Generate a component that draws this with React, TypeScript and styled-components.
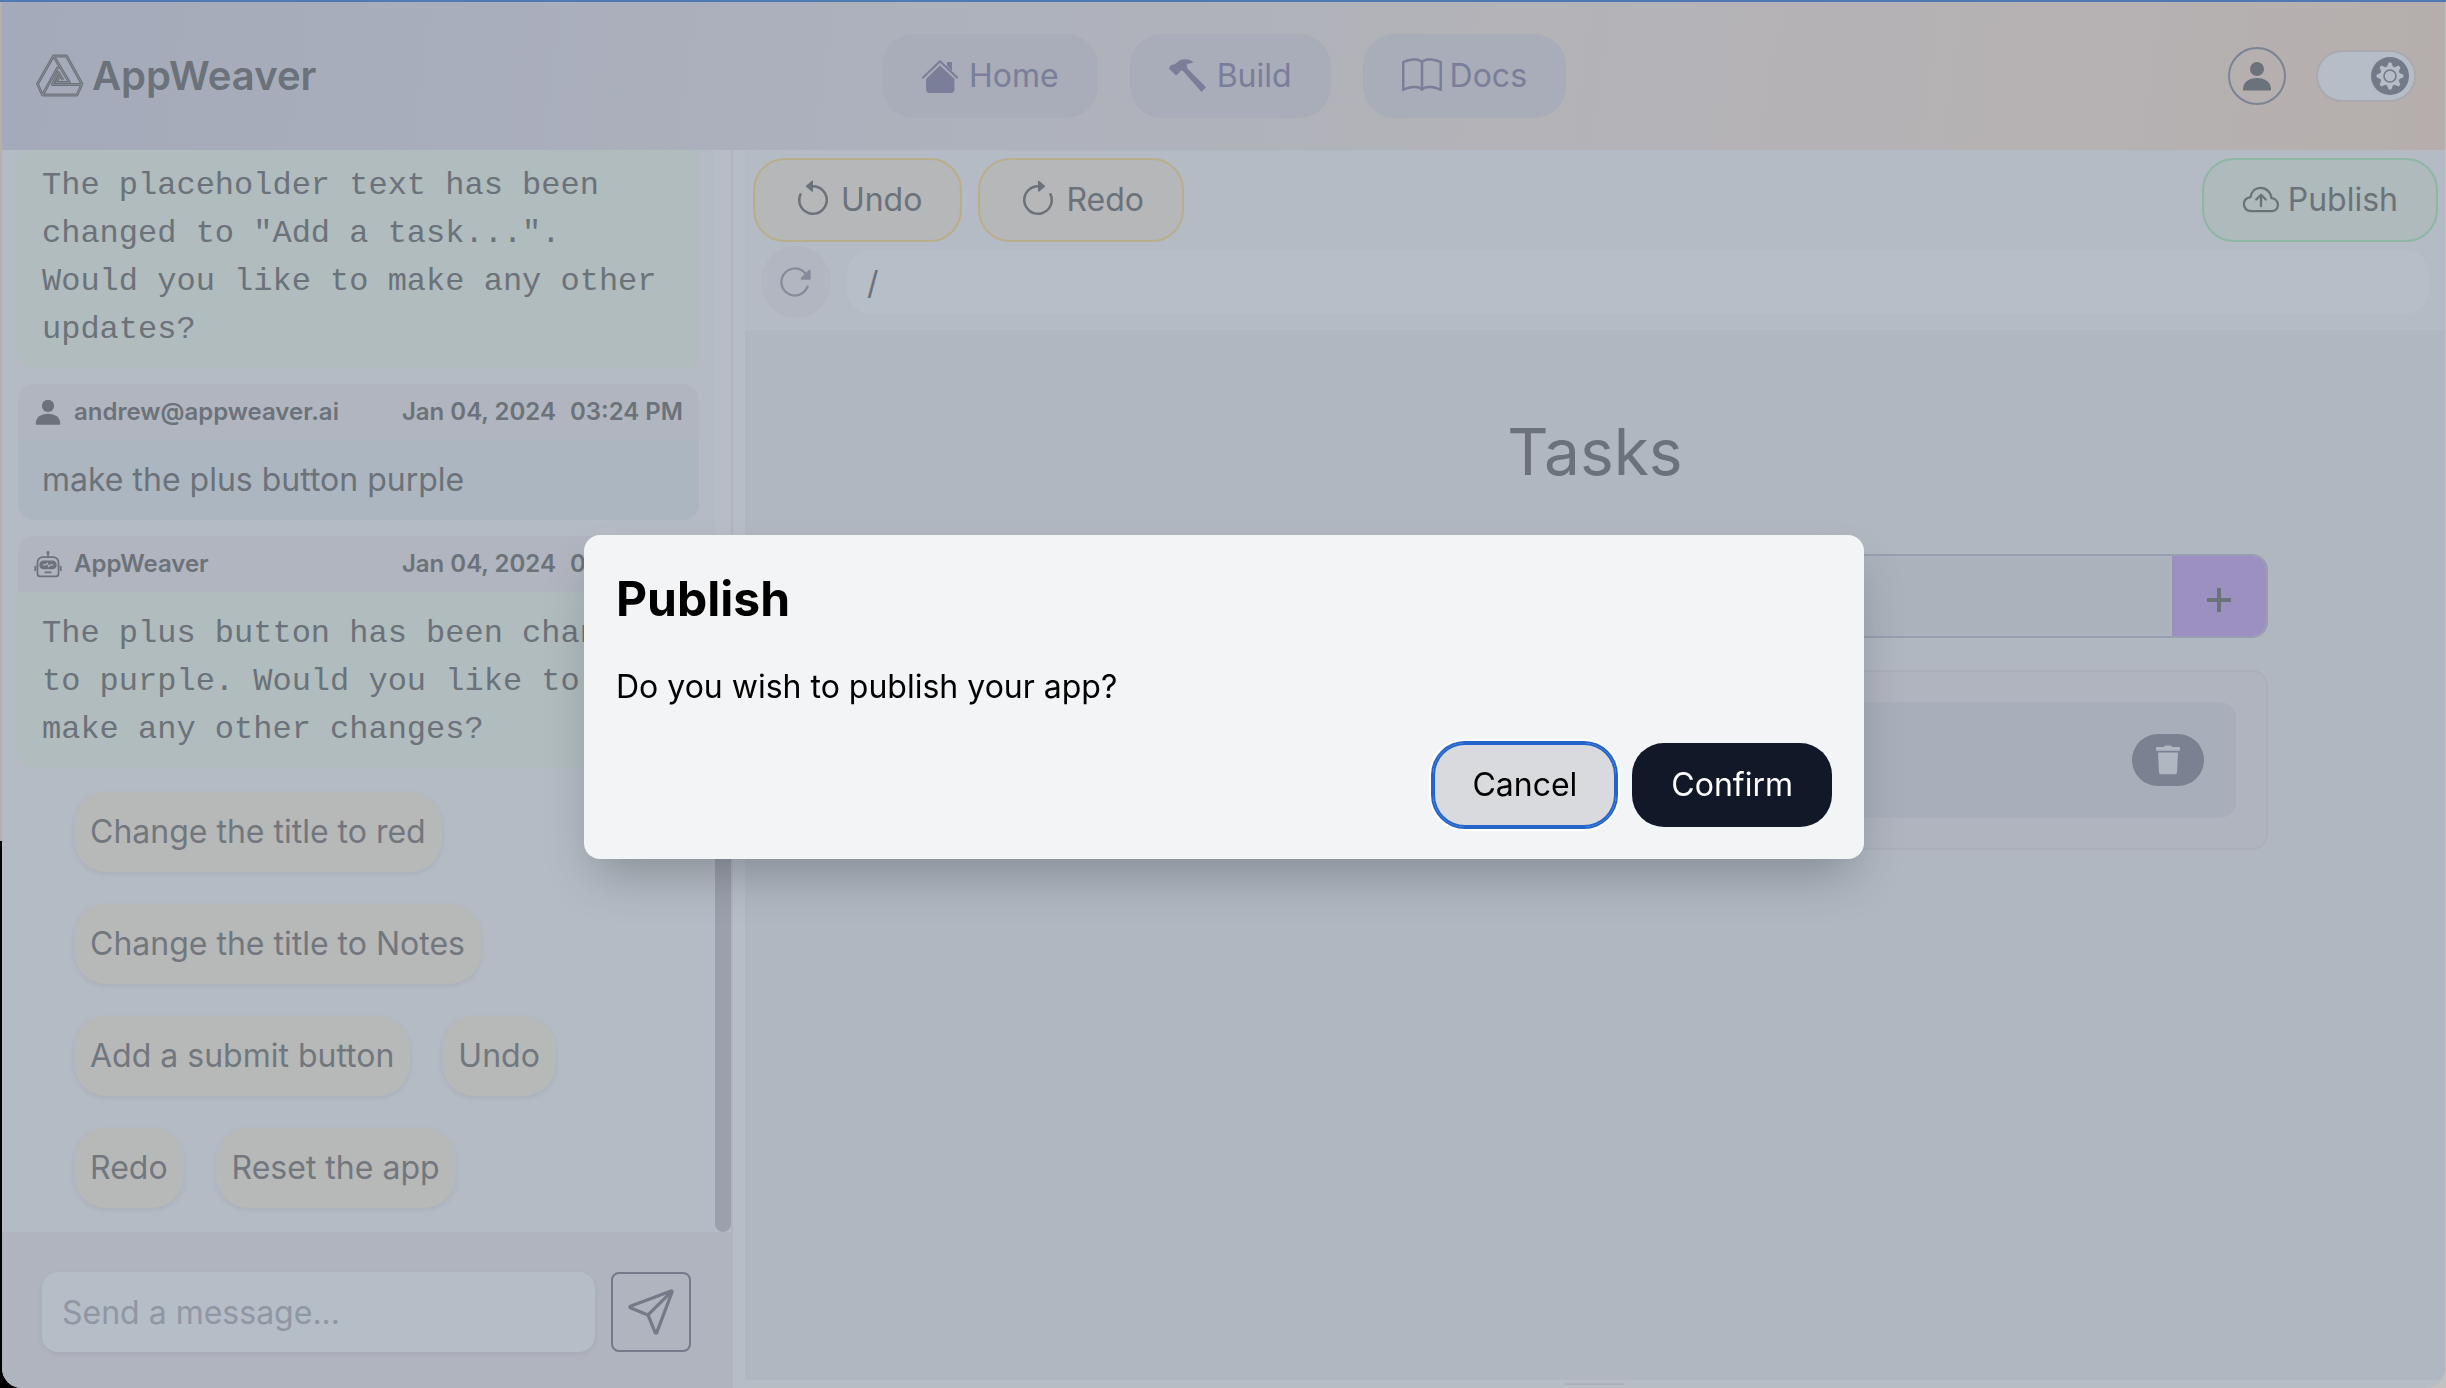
import React from "react";
import styled, { createGlobalStyle } from "styled-components";
import { BsArrowClockwise, BsArrowCounterclockwise, BsBook } from "react-icons/bs";
import { IoPaperPlaneOutline, IoReloadOutline } from "react-icons/io5";

const ink = "#6c7279";
const slate = "#747a88";
const sans = `Inter, "Liberation Sans", sans-serif`;
const mono = `"Liberation Mono", "DejaVu Sans Mono", monospace`;

const GlobalStyle = createGlobalStyle`
  *, *::before, *::after { box-sizing: border-box; }
  body { margin: 0; font-family: ${sans}; font-size: 32px; line-height: 48px; color: ${ink}; }
  button, input { font: inherit; color: inherit; margin: 0; padding: 0; border: 0; background: none; outline: none; }
  button { cursor: pointer; }
  a { color: inherit; text-decoration: none; }
  h1, h2, p { margin: 0; }
  svg { display: block; flex: none; }
`;

const Desktop = styled.div`
  height: 100vh;
  padding: 0 1px 0 2px;
  border-top: 2px solid #4f79b3;
  background: linear-gradient(#b3b0ae 0 839px, #000 839px) left / 50% 100% no-repeat, #c3c2c3;
  overflow: hidden;
`;

const Window = styled.div`
  height: 100%;
  display: flex;
  flex-direction: column;
  border-radius: 0 0 20px 20px;
  overflow: hidden;
  background: #b6bdc7;
`;

/* ---------- header ---------- */

const Header = styled.header`
  flex: none;
  height: 148px;
  padding: 0 29px 0 34px;
  display: grid;
  grid-template-columns: 1fr auto 1fr;
  align-items: center;
  background: linear-gradient(98deg, #a5aaba 0%, #a9aebc 20%, #aeb2bc 42%, #b3b3b8 62%, #b6b2b4 82%, #b5aeac 100%);
`;

const Brand = styled.a`
  display: flex;
  align-items: center;
  gap: 8px;
  font-size: 40px;
  font-weight: 600;
`;

const Nav = styled.nav`
  display: flex;
  gap: 32px;
  margin-right: 4px;
`;

const NavLink = styled.a`
  display: flex;
  align-items: center;
  gap: 8px;
  height: 84px;
  padding: 0 39px;
  border-radius: 32px;
  background: #a9acb9;
  color: #7a7e99;
`;

const HeaderTools = styled.div`
  display: flex;
  justify-content: flex-end;
  align-items: center;
  gap: 30px;
`;

const Avatar = styled.button`
  width: 58px;
  height: 58px;
  border: 2px solid #7b8494;
  border-radius: 50%;
  display: grid;
  place-items: center;
`;

const Toggle = styled.label`
  width: 100px;
  height: 52px;
  padding: 0 5px;
  border: 2px solid #aaa9ae;
  border-radius: 26px;
  background: #b5bdc7;
  display: flex;
  align-items: center;
  justify-content: flex-end;
  cursor: pointer;
`;

const ToggleInput = styled.input`
  appearance: none;
  width: 0;
  height: 0;
`;

const Knob = styled.span`
  width: 38px;
  height: 38px;
  border-radius: 50%;
  background: ${slate};
  display: grid;
  place-items: center;
`;

/* ---------- chat ---------- */

const Body = styled.div`
  flex: 1;
  min-height: 0;
  display: flex;
`;

const Chat = styled.aside`
  flex: 0 0 calc(30% - 2px);
  min-width: 0;
  display: flex;
  flex-direction: column;
  border-right: 2px solid #b0b4be;
`;

const History = styled.div`
  flex: 1;
  min-height: 0;
  display: flex;
`;

const Messages = styled.div`
  flex: 1;
  min-width: 0;
  padding: 0 16px 24px;
  display: flex;
  flex-direction: column;
  justify-content: flex-end;
  gap: 16px;
  overflow: hidden;
  background: #b4bbc4;
`;

const ScrollTrack = styled.div`
  flex: none;
  width: 16px;
  display: flex;
  align-items: flex-end;
`;

const ScrollThumb = styled.div`
  width: 16px;
  height: 38%;
  border-radius: 8px;
  background: #9aa0ac;
`;

const Message = styled.article`
  flex: none;
  border-radius: 16px;
  overflow: hidden;
`;

const Meta = styled.header`
  display: flex;
  align-items: center;
  gap: 14px;
  height: 56px;
  padding: 0 16px;
  background: #b1b5bf;
  font-size: 24px;
  line-height: 32px;
  font-weight: 600;
`;

const Sender = styled.span`
  flex: 1;
  display: flex;
  align-items: center;
  gap: 12px;
`;

const MessageText = styled.p<{ $bot?: boolean }>`
  padding: ${(p) => (p.$bot ? "18px 32px 14px 24px" : "16px 24px")};
  background: ${(p) => (p.$bot ? "#b0bcbe" : "#abb6c0")};
  font-family: ${(p) => (p.$bot ? mono : sans)};
`;

const Suggestions = styled.div`
  flex: none;
  display: flex;
  flex-wrap: wrap;
  gap: 32px;
  padding: 8px 56px 0;
`;

const Chip = styled.button`
  height: 80px;
  padding: 0 16px;
  border-radius: 32px;
  background: #b7b9b8;
  color: #72777e;
  box-shadow: 0 2px 4px rgba(120, 120, 140, 0.16);
`;

const Composer = styled.form`
  flex: none;
  height: 156px;
  padding: 40px 40px 36px;
  display: flex;
  gap: 16px;
  background: #b0b4be;
`;

const MessageInput = styled.input`
  flex: 1;
  min-width: 0;
  height: 80px;
  padding: 0 20px;
  border-radius: 16px;
  background: #b5bdc7;
  box-shadow: 0 2px 4px rgba(120, 120, 140, 0.16);
  &::placeholder { color: #9097a3; opacity: 1; }
`;

const SendButton = styled.button`
  width: 80px;
  height: 80px;
  border: 2px solid ${slate};
  border-radius: 8px;
  color: ${slate};
  display: grid;
  place-items: center;
`;

/* ---------- workspace ---------- */

const Workspace = styled.main`
  flex: 1;
  min-width: 0;
  margin-left: 12px;
  display: flex;
  flex-direction: column;
  background: #b4bbc4;
`;

const Toolbar = styled.div`
  display: flex;
  gap: 16px;
  padding: 8px 7px 4px 8px;
`;

const ToolButton = styled.button<{ $publish?: boolean }>`
  display: flex;
  align-items: center;
  gap: 8px;
  height: 84px;
  padding: 0 38px;
  margin-left: ${(p) => (p.$publish ? "auto" : "0")};
  border: 2px solid ${(p) => (p.$publish ? "#8fb6a2" : "#b9ae8c")};
  border-radius: 32px;
  background: ${(p) => (p.$publish ? "#aebabb" : "#b5b7b8")};
`;

const AddressBar = styled.div`
  display: flex;
  align-items: center;
  gap: 16px;
  padding: 0 16px 12px;
`;

const ReloadButton = styled.button`
  width: 70px;
  height: 72px;
  border-radius: 50%;
  background: #b1b6c0;
  color: #858b99;
  display: grid;
  place-items: center;
`;

const AddressInput = styled.input`
  flex: 1;
  height: 64px;
  padding: 0 20px;
  border-radius: 24px;
  background: #b6bec7;
`;

const Preview = styled.section`
  flex: 1;
  min-height: 0;
  padding: 76px 32px 0;
  display: flex;
  flex-direction: column;
  align-items: center;
  gap: 32px;
  background: #b0b7c1;
`;

const PreviewTitle = styled.h1`
  font-size: 64px;
  line-height: 92px;
  font-weight: 400;
  padding-bottom: 24px;
`;

const TaskForm = styled.form`
  width: 100%;
  max-width: 1346px;
  height: 84px;
  display: flex;
  border: 2px solid #979eb0;
  border-radius: 16px;
  overflow: hidden;
`;

const TaskInput = styled.input`
  flex: 1;
  min-width: 0;
  padding: 0 24px;
  background: #abb2bc;
`;

const AddButton = styled.button`
  width: 94px;
  background: #9c90c2;
  display: grid;
  place-items: center;
  padding-top: 8px;
`;

const TaskList = styled.ul`
  width: 100%;
  max-width: 1346px;
  margin: 0;
  padding: 30px;
  border: 2px solid #abafba;
  border-radius: 16px;
  background: #b0b4be;
  list-style: none;
`;

const Task = styled.li`
  display: flex;
  justify-content: flex-end;
  padding: 32px;
  border-radius: 16px;
  background: #a8afbb;
`;

const DeleteButton = styled.button`
  width: 72px;
  height: 52px;
  border-radius: 26px;
  background: #7b8190;
  display: grid;
  place-items: center;
`;

const ResizeBar = styled.div`
  flex: none;
  height: 8px;
  display: grid;
  place-items: center;
  background: #b6bdc5;
  &::after { content: ""; width: 60px; height: 2px; background: #adb2bb; }
`;

/* ---------- dialog ---------- */

const Backdrop = styled.div`
  position: fixed;
  inset: 0;
  padding: 6px 0 0 2px;
  display: grid;
  place-items: center;
`;

const Dialog = styled.div`
  width: 1280px;
  max-width: 92%;
  padding: 32px;
  display: flex;
  flex-direction: column;
  gap: 32px;
  border-radius: 16px;
  background: #f3f4f6;
  color: #000;
  box-shadow: 0 25px 50px -12px rgba(0, 0, 0, 0.25);
`;

const DialogTitle = styled.h2`
  font-size: 48px;
  line-height: 64px;
  font-weight: 700;
`;

const DialogActions = styled.div`
  display: flex;
  justify-content: flex-end;
  gap: 16px;
`;

const DialogButton = styled.button<{ $primary?: boolean }>`
  height: 84px;
  padding: 0 39px;
  border-radius: 32px;
  background: ${(p) => (p.$primary ? "#111827" : "#d8dade")};
  color: ${(p) => (p.$primary ? "#fff" : "#000")};
  box-shadow: ${(p) =>
    p.$primary ? "none" : "inset 0 0 0 2px #2264cc, 0 0 0 2px #2264cc, 0 0 0 4px #fff"};
`;

/* ---------- drawings ---------- */

const logoLines =
  "M17.5 2H30.5L46 30L41 41H6.5L1.5 30Z M17.5 2L33.5 28.5H20.5L23.5 22 M46 30.5H16.5L22.5 18.5L27 26 M6.5 41L22 13";

const Logo = () => (
  <svg width="48" height="44" viewBox="0 0 48 44" fill="none" strokeLinejoin="round">
    <path d={logoLines} stroke={ink} strokeWidth="2.8" />
    <path d={logoLines} stroke="#9096a2" strokeWidth="0.7" />
  </svg>
);

const HomeIcon = () => (
  <svg width="40" height="40" viewBox="0 0 40 40" fill="currentColor">
    <path d="M19 9.5L33.5 23V33a4 4 0 0 1-4 4H9a4 4 0 0 1-4-4V23Z" />
    <path d="M26 6h5v9l-5-5Z" />
    <path d="M2 21.5L19 5.2L36 21.5" fill="none" stroke="currentColor" strokeWidth="2.2" strokeLinecap="round" strokeLinejoin="round" />
  </svg>
);

const HammerIcon = () => (
  <svg width="40" height="40" viewBox="0 0 40 40" fill="currentColor">
    <path d="M0 12.5L1.5 9.5L6 8L11 4.2C15 2.4 21 2.8 24.5 6.5C22 7.6 19 7 17.5 8.8L18.5 12.5L37 31.2L32.5 36L14 15C12.6 14 11 14.5 10.5 16.5L7 19.5Z" />
  </svg>
);

const CloudUploadIcon = () => (
  <svg width="38" height="38" viewBox="0 0 40 40" fill="none" stroke="currentColor" strokeWidth="2.4" strokeLinecap="round" strokeLinejoin="round">
    <path d="M9.5 31.7C5 31.7 2 28.5 2 24.5C2 20.5 4.8 17.6 9 17C10 11 14 7.2 19.5 7.2C25.5 7.2 30.5 12 31 18C35 18.5 37.8 21.5 37.8 25.2C37.8 29 35 31.7 31 31.7Z" />
    <path d="M20 26.5V14.5M15 19.5L20 14.5L25 19.5" />
  </svg>
);

const PersonIcon = ({ size }: { size: number }) => (
  <svg width={size} height={size} viewBox="0 0 32 32" fill="currentColor">
    <circle cx="16" cy="9" r="7" />
    <path d="M2 29.5C2 22 8 18 16 18s14 4 14 11.5c0 .8-.4 1-1 1H3c-.6 0-1-.2-1-1Z" />
  </svg>
);

const RobotIcon = () => (
  <svg width="28" height="28" viewBox="0 0 32 32" fill="none" stroke="currentColor" strokeWidth="2">
    <circle cx="16" cy="3" r="1.8" fill="currentColor" stroke="none" />
    <path d="M16 3v5M1.5 18v6M30.5 18v6" />
    <path d="M10 8h12a6 6 0 0 1 6 6v13a3 3 0 0 1-3 3H7a3 3 0 0 1-3-3V14a6 6 0 0 1 6-6Z" />
    <rect x="7" y="13" width="18" height="8" rx="4" fill="currentColor" />
    <path d="M10 17h3l2-2l2 4l2-2h3" stroke="#b1b5bf" strokeWidth="1.2" />
    <path d="M12 25.5h8" />
  </svg>
);

const gearPoints = Array.from({ length: 32 }, (_, i) => {
  const radius = i % 4 < 2 ? 13.5 : 10;
  const angle = ((i - 0.5) * Math.PI) / 16;
  return `${(14 + radius * Math.sin(angle)).toFixed(2)},${(14 - radius * Math.cos(angle)).toFixed(2)}`;
}).join(" ");

const GearIcon = () => (
  <svg width="28" height="28" viewBox="0 0 28 28">
    <polygon points={gearPoints} fill="#b5bdc7" />
    <circle cx="14" cy="14" r="6" fill="none" stroke={slate} strokeWidth="1.6" />
  </svg>
);

const PlusIcon = () => (
  <svg width="26" height="26" viewBox="0 0 26 26" stroke="currentColor" strokeWidth="4">
    <path d="M13 1v24M1 13h24" />
  </svg>
);

const TrashIcon = () => (
  <svg width="28" height="30" viewBox="0 0 28 30" fill="#b0b7c1">
    <path d="M10 2c0-1 1-1.5 2-1.5h4c1 0 2 .5 2 1.5h6.5c1 0 1.5.6 1.5 1.4v1c0 .8-.5 1.3-1.5 1.3h-21C2.5 5.7 2 5.2 2 4.4v-1C2 2.6 2.5 2 3.5 2Z" />
    <path d="M4 7.5h20l-1 19.5c-.1 1.4-1 2.3-2.3 2.3H7.3C6 29.3 5.1 28.4 5 27Z" />
  </svg>
);

const suggestions = [
  "Change the title to red",
  "Change the title to Notes",
  "Add a submit button",
  "Undo",
  "Redo",
  "Reset the app",
];

export default function App() {
  const stop = (e: React.FormEvent) => e.preventDefault();
  return (
    <>
      <GlobalStyle />
      <Desktop>
        <Window>
          <Header>
            <Brand href="#"><Logo />AppWeaver</Brand>
            <Nav>
              <NavLink href="#home"><HomeIcon />Home</NavLink>
              <NavLink href="#build"><HammerIcon />Build</NavLink>
              <NavLink href="#docs"><BsBook size={40} />Docs</NavLink>
            </Nav>
            <HeaderTools>
              <Avatar aria-label="Account"><PersonIcon size={32} /></Avatar>
              <Toggle>
                <ToggleInput type="checkbox" defaultChecked aria-label="Light theme" />
                <Knob><GearIcon /></Knob>
              </Toggle>
            </HeaderTools>
          </Header>
          <Body>
            <Chat>
              <History>
                <Messages>
                  <Message>
                    <MessageText $bot>
                      The placeholder text has been changed to "Add a task...". Would you like to make any other updates?
                    </MessageText>
                  </Message>
                  <Message>
                    <Meta>
                      <Sender><PersonIcon size={28} />andrew@appweaver.ai</Sender>
                      <span>Jan 04, 2024</span>
                      <span>03:24 PM</span>
                    </Meta>
                    <MessageText>make the plus button purple</MessageText>
                  </Message>
                  <Message>
                    <Meta>
                      <Sender><RobotIcon />AppWeaver</Sender>
                      <span>Jan 04, 2024</span>
                      <span>03:24 PM</span>
                    </Meta>
                    <MessageText $bot>
                      The plus button has been changed to purple. Would you like to make any other changes?
                    </MessageText>
                  </Message>
                  <Suggestions>
                    {suggestions.map((s) => <Chip key={s}>{s}</Chip>)}
                  </Suggestions>
                </Messages>
                <ScrollTrack><ScrollThumb /></ScrollTrack>
              </History>
              <Composer onSubmit={stop}>
                <MessageInput aria-label="Message" placeholder="Send a message..." />
                <SendButton aria-label="Send"><IoPaperPlaneOutline size={52} /></SendButton>
              </Composer>
            </Chat>
            <Workspace>
              <Toolbar>
                <ToolButton><BsArrowCounterclockwise size={40} />Undo</ToolButton>
                <ToolButton><BsArrowClockwise size={40} />Redo</ToolButton>
                <ToolButton $publish><CloudUploadIcon />Publish</ToolButton>
              </Toolbar>
              <AddressBar>
                <ReloadButton aria-label="Reload"><IoReloadOutline size={36} /></ReloadButton>
                <AddressInput aria-label="Path" defaultValue="/" />
              </AddressBar>
              <Preview>
                <PreviewTitle>Tasks</PreviewTitle>
                <TaskForm onSubmit={stop}>
                  <TaskInput aria-label="New task" />
                  <AddButton aria-label="Add task"><PlusIcon /></AddButton>
                </TaskForm>
                <TaskList>
                  <Task><DeleteButton aria-label="Delete task"><TrashIcon /></DeleteButton></Task>
                </TaskList>
              </Preview>
              <ResizeBar />
            </Workspace>
          </Body>
        </Window>
      </Desktop>
      <Backdrop>
        <Dialog role="dialog" aria-modal="true" aria-labelledby="publish-title">
          <DialogTitle id="publish-title">Publish</DialogTitle>
          <p>Do you wish to publish your app?</p>
          <DialogActions>
            <DialogButton>Cancel</DialogButton>
            <DialogButton $primary>Confirm</DialogButton>
          </DialogActions>
        </Dialog>
      </Backdrop>
    </>
  );
}
